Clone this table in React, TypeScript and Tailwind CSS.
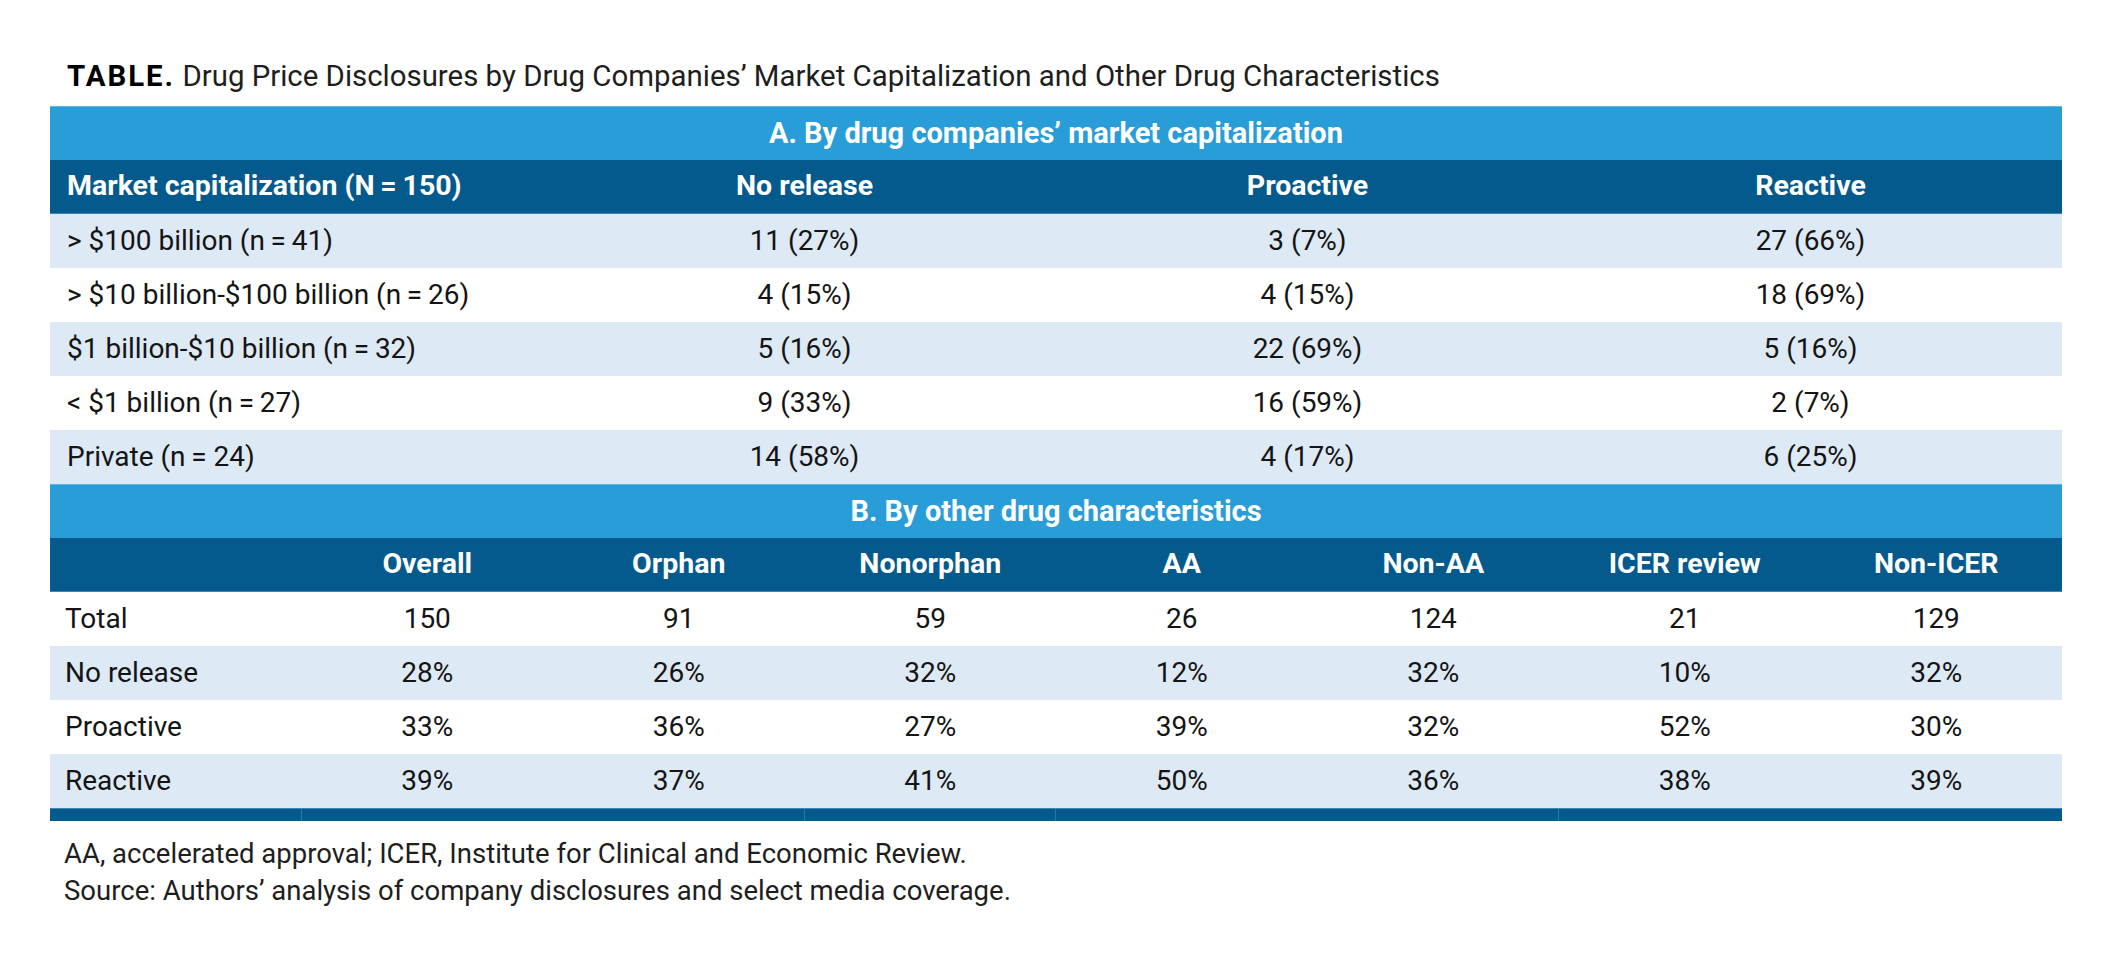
import React from "react";

const marketRows = [
  ["> $100 billion (n\u2009=\u200941)", "11 (27%)", "3 (7%)", "27 (66%)"],
  ["> $10 billion-$100 billion (n\u2009=\u200926)", "4 (15%)", "4 (15%)", "18 (69%)"],
  ["$1 billion-$10 billion (n\u2009=\u200932)", "5 (16%)", "22 (69%)", "5 (16%)"],
  ["< $1 billion (n\u2009=\u200927)", "9 (33%)", "16 (59%)", "2 (7%)"],
  ["Private (n\u2009= 24)", "14 (58%)", "4 (17%)", "6 (25%)"],
];

const charHeaders = ["", "Overall", "Orphan", "Nonorphan", "AA", "Non-AA", "ICER review", "Non-ICER"];

const charRows = [
  ["Total", "150", "91", "59", "26", "124", "21", "129"],
  ["No release", "28%", "26%", "32%", "12%", "32%", "10%", "32%"],
  ["Proactive", "33%", "36%", "27%", "39%", "32%", "52%", "30%"],
  ["Reactive", "39%", "37%", "41%", "50%", "36%", "38%", "39%"],
];

function SectionBar({ label }: { label: string }) {
  return (
    <div className="h-[54px] bg-[#289dd8] border-t border-[#5fb6e2] flex items-center justify-center text-white font-bold text-[29px]">
      {label}
    </div>
  );
}

export default function App() {
  return (
    <main className="w-[2113px] h-[966px] bg-white text-[#141414] font-['Roboto',sans-serif]">
      {/* Title */}
      <div className="pt-[60px] pl-[67px] h-[106px] text-[29.4px] leading-[32px] text-[#1e1e1e]">
        <span className="font-bold tracking-[2px] text-black">TABLE.</span>{" "}
        Drug Price Disclosures by Drug Companies’ Market Capitalization and Other Drug Characteristics
      </div>

      <div className="ml-[50px] w-[2012px]">
        {/* Section A */}
        <SectionBar label="A. By drug companies’ market capitalization" />
        <div className="grid grid-cols-4 h-[54px] bg-[#045a8c] text-white font-bold text-[28.5px] items-center border-b border-[#3f86b3]">
          <div className="pl-[17px]">Market capitalization (N{"\u2009=\u2009"}150)</div>
          <div className="text-center">No release</div>
          <div className="text-center">Proactive</div>
          <div className="text-center">Reactive</div>
        </div>
        {marketRows.map((row, i) => (
          <div
            key={row[0]}
            className={`grid grid-cols-4 h-[54px] items-center text-[28px] ${i % 2 === 0 ? "bg-[#dde9f5]" : "bg-white"}`}
          >
            <div className="pl-[17px]">{row[0]}</div>
            <div className="text-center">{row[1]}</div>
            <div className="text-center">{row[2]}</div>
            <div className="text-center">{row[3]}</div>
          </div>
        ))}

        {/* Section B */}
        <SectionBar label="B. By other drug characteristics" />
        <div className="grid grid-cols-8 h-[54px] bg-[#045a8c] text-white font-bold text-[28.5px] items-center border-b border-[#3f86b3]">
          {charHeaders.map((h, i) => (
            <div key={i} className="text-center">
              {h}
            </div>
          ))}
        </div>
        {charRows.map((row, i) => (
          <div
            key={row[0]}
            className={`grid grid-cols-8 h-[54px] items-center text-[28px] ${i % 2 === 1 ? "bg-[#dde9f5]" : "bg-white"}`}
          >
            {row.map((cell, j) => (
              <div key={j} className={j === 0 ? "pl-[15px]" : "text-center"}>
                {cell}
              </div>
            ))}
          </div>
        ))}
        <div className="grid grid-cols-8 h-[13px] bg-[#045a8c] border-t border-[#3f86b3]">
          <div className="border-r border-[#2f78a6]" />
          <div />
          <div className="border-r border-[#2f78a6]" />
          <div className="border-r border-[#2f78a6]" />
          <div />
          <div className="border-r border-[#2f78a6]" />
          <div />
          <div />
        </div>
      </div>

      {/* Footnotes */}
      <div className="pl-[64px] pt-[14px] text-[27.5px] leading-[37px] text-[#1e1e1e]">
        <p>AA, accelerated approval; ICER, Institute for Clinical and Economic Review.</p>
        <p>Source: Authors’ analysis of company disclosures and select media coverage.</p>
      </div>
    </main>
  );
}
